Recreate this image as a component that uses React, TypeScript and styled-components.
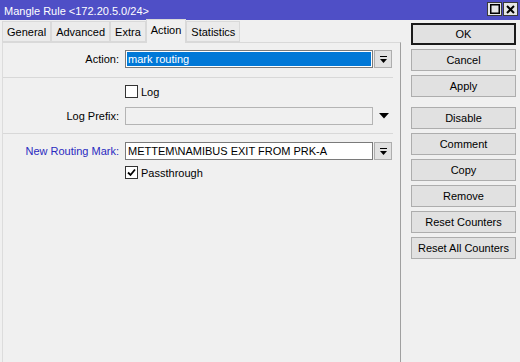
import React from 'react';
import styled, { createGlobalStyle } from 'styled-components';

const GlobalStyle = createGlobalStyle`
  html, body {
    margin: 0;
    padding: 0;
    background: #f0f0f0;
  }
  body {
    font-family: "Liberation Sans", Arial, sans-serif;
    font-size: 11px;
    color: #000;
  }
`;

const Window = styled.div`
  width: 520px;
  height: 362px;
  display: flex;
  flex-direction: column;
  background: #f0f0f0;
  overflow: hidden;
`;

const TitleBar = styled.div`
  height: 20px;
  flex: none;
  box-sizing: border-box;
  display: flex;
  align-items: center;
  padding: 0 2px 0 4px;
  background: #4f4fc6;
  color: #fff;
`;

const Title = styled.div`
  flex: 1;
  font-size: 11px;
  padding-top: 1px;
`;

const TitleButtons = styled.div`
  display: flex;
  gap: 1px;
  margin-top: -2px;
`;

const TitleBtn = styled.div`
  width: 15px;
  height: 14px;
  box-sizing: border-box;
  border: 1px solid #3a3a3a;
  background: #e6e6e6;
  display: flex;
  align-items: center;
  justify-content: center;
`;

const Body = styled.div`
  flex: 1;
  display: flex;
  min-height: 0;
`;

const LeftPane = styled.div`
  width: 401px;
  flex: none;
  box-sizing: border-box;
  padding-left: 2px;
  display: flex;
  flex-direction: column;
`;

const TabBar = styled.div`
  height: 22px;
  flex: none;
  display: flex;
  align-items: flex-end;
  position: relative;
  z-index: 1;
`;

const Tab = styled.div<{ $active?: boolean }>`
  height: ${(p) => (p.$active ? 24 : 21)}px;
  box-sizing: border-box;
  padding: 0 4px;
  margin-bottom: ${(p) => (p.$active ? -1 : 0)}px;
  display: flex;
  align-items: center;
  padding-bottom: ${(p) => (p.$active ? 3 : 0)}px;
  border: 1px solid #d9d9d9;
  border-bottom: ${(p) => (p.$active ? 'none' : '1px solid #d9d9d9')};
  background: ${(p) => (p.$active ? '#f0f0f0' : '#ebebeb')};
  white-space: nowrap;
`;

const Panel = styled.div`
  flex: 1;
  box-sizing: border-box;
  border-top: 1px solid #d9d9d9;
  border-left: 1px solid #dcdcdc;
  border-right: 1px solid #a0a0a0;
`;

const Section = styled.div<{ $pad: string; $gap?: number; $line?: boolean }>`
  display: flex;
  flex-direction: column;
  gap: ${(p) => p.$gap ?? 0}px;
  padding: ${(p) => p.$pad};
  margin: 0 7px 0 0;
  border-bottom: ${(p) => (p.$line ? '1px solid #d8d8d8' : 'none')};
`;

const Row = styled.div`
  display: grid;
  grid-template-columns: 122px 248px 19px;
  align-items: center;
`;

const Label = styled.div<{ $accent?: boolean }>`
  text-align: right;
  padding-right: 6px;
  color: ${(p) => (p.$accent ? '#2a2ac0' : '#000')};
  white-space: nowrap;
`;

const Field = styled.div<{ $variant?: 'selected' | 'disabled' }>`
  height: 18px;
  box-sizing: border-box;
  border: 1px solid ${(p) => (p.$variant === 'disabled' ? '#b4b4b4' : '#7a7a7a')};
  background: ${(p) => (p.$variant === 'disabled' ? '#f0f0f0' : '#fff')};
  padding: ${(p) => (p.$variant === 'selected' ? '1px' : '0 2px')};
  line-height: 16px;
  white-space: nowrap;
  overflow: hidden;
`;

const Selection = styled.div`
  height: 14px;
  line-height: 14px;
  background: #0078d7;
  color: #fff;
  padding: 0 1px;
`;

const DropButton = styled.div`
  margin-left: 1px;
  width: 18px;
  height: 18px;
  box-sizing: border-box;
  border: 1px solid #adadad;
  background: #e1e1e1;
  display: flex;
  align-items: center;
  justify-content: center;
`;

const DropArrow = styled.div`
  margin-left: 5px;
  width: 12px;
  height: 18px;
  display: flex;
  align-items: center;
  justify-content: center;
`;

const CheckLine = styled.label`
  grid-column: 2;
  display: flex;
  align-items: center;
  gap: 3px;
  height: 13px;
`;

const CheckBox = styled.span`
  width: 13px;
  height: 13px;
  box-sizing: border-box;
  border: 1px solid #333;
  background: #fff;
  display: flex;
  align-items: center;
  justify-content: center;
`;

const RightPane = styled.div`
  flex: 1;
  padding: 3px 0 0 10px;
  display: flex;
  flex-direction: column;
  gap: 10px;
`;

const ButtonStack = styled.div`
  display: flex;
  flex-direction: column;
  gap: 4px;
`;

const Button = styled.div<{ $default?: boolean }>`
  width: 105px;
  height: 22px;
  box-sizing: border-box;
  border: ${(p) => (p.$default ? '2px solid #1a1a1a' : '1px solid #adadad')};
  background: #e1e1e1;
  display: flex;
  align-items: center;
  justify-content: center;
  white-space: nowrap;
`;

const ComboIcon = () => (
  <svg width="9" height="9" viewBox="0 0 9 9">
    <rect x="1" y="1" width="7" height="1" fill="#000" />
    <polygon points="1,4 8,4 4.5,8" fill="#000" />
  </svg>
);

const ArrowIcon = () => (
  <svg width="10" height="6" viewBox="0 0 10 6">
    <polygon points="0,0 10,0 5,5.5" fill="#000" />
  </svg>
);

const Check = ({ checked }: { checked?: boolean }) => (
  <CheckBox>
    {checked && (
      <svg width="9" height="9" viewBox="0 0 9 9">
        <path d="M1 4.5 L3.5 7 L8 1.5" stroke="#000" strokeWidth="1.8" fill="none" />
      </svg>
    )}
  </CheckBox>
);

const tabs = ['General', 'Advanced', 'Extra', 'Action', 'Statistics'];

const App: React.FC = () => {
  return (
    <Window>
      <GlobalStyle />
      <TitleBar>
        <Title>Mangle Rule &lt;172.20.5.0/24&gt;</Title>
        <TitleButtons>
          <TitleBtn>
            <svg width="10" height="10" viewBox="0 0 10 10">
              <rect x="0.75" y="0.75" width="8.5" height="8.5" fill="none" stroke="#000" strokeWidth="1.5" />
            </svg>
          </TitleBtn>
          <TitleBtn>
            <svg width="9" height="9" viewBox="0 0 9 9">
              <path d="M1 1 L8 8 M8 1 L1 8" stroke="#000" strokeWidth="2" />
            </svg>
          </TitleBtn>
        </TitleButtons>
      </TitleBar>
      <Body>
        <LeftPane>
          <TabBar>
            {tabs.map((t) => (
              <Tab key={t} $active={t === 'Action'}>
                {t}
              </Tab>
            ))}
          </TabBar>
          <Panel>
            <Section $pad="7px 0 9px" $line>
              <Row>
                <Label>Action:</Label>
                <Field $variant="selected">
                  <Selection>mark routing</Selection>
                </Field>
                <DropButton>
                  <ComboIcon />
                </DropButton>
              </Row>
            </Section>
            <Section $pad="7px 0 8px" $gap={9} $line>
              <Row>
                <CheckLine>
                  <Check />
                  Log
                </CheckLine>
              </Row>
              <Row>
                <Label>Log Prefix:</Label>
                <Field $variant="disabled" />
                <DropArrow>
                  <ArrowIcon />
                </DropArrow>
              </Row>
            </Section>
            <Section $pad="8px 0" $gap={6}>
              <Row>
                <Label $accent>New Routing Mark:</Label>
                <Field>METTEM\NAMIBUS EXIT FROM PRK-A</Field>
                <DropButton>
                  <ComboIcon />
                </DropButton>
              </Row>
              <Row>
                <CheckLine>
                  <Check checked />
                  Passthrough
                </CheckLine>
              </Row>
            </Section>
          </Panel>
        </LeftPane>
        <RightPane>
          <ButtonStack>
            <Button $default>OK</Button>
            <Button>Cancel</Button>
            <Button>Apply</Button>
          </ButtonStack>
          <ButtonStack>
            <Button>Disable</Button>
            <Button>Comment</Button>
            <Button>Copy</Button>
            <Button>Remove</Button>
            <Button>Reset Counters</Button>
            <Button>Reset All Counters</Button>
          </ButtonStack>
        </RightPane>
      </Body>
    </Window>
  );
};

export default App;
